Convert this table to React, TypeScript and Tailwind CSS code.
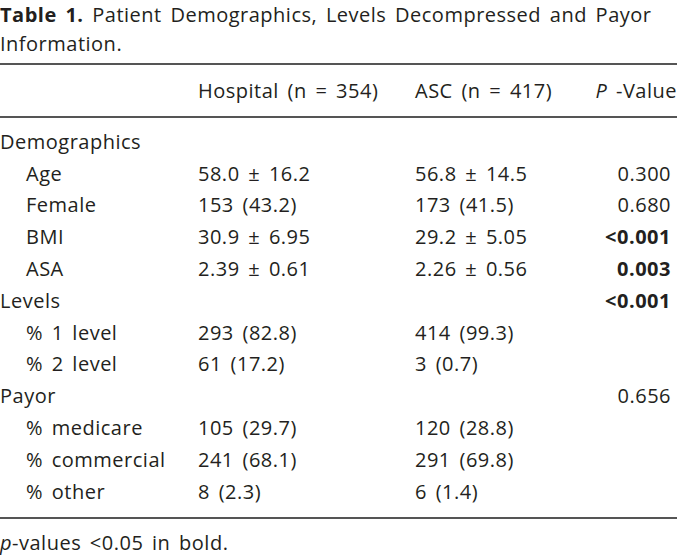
const rows: { label: string; indent?: boolean; h?: string; a?: string; p?: string; bold?: boolean }[] = [
  { label: "Demographics" },
  { label: "Age", indent: true, h: "58.0 ± 16.2", a: "56.8 ± 14.5", p: "0.300" },
  { label: "Female", indent: true, h: "153 (43.2)", a: "173 (41.5)", p: "0.680" },
  { label: "BMI", indent: true, h: "30.9 ± 6.95", a: "29.2 ± 5.05", p: "<0.001", bold: true },
  { label: "ASA", indent: true, h: "2.39 ± 0.61", a: "2.26 ± 0.56", p: "0.003", bold: true },
  { label: "Levels", p: "<0.001", bold: true },
  { label: "% 1 level", indent: true, h: "293 (82.8)", a: "414 (99.3)" },
  { label: "% 2 level", indent: true, h: "61 (17.2)", a: "3 (0.7)" },
  { label: "Payor", p: "0.656" },
  { label: "% medicare", indent: true, h: "105 (29.7)", a: "120 (28.8)" },
  { label: "% commercial", indent: true, h: "241 (68.1)", a: "291 (69.8)" },
  { label: "% other", indent: true, h: "8 (2.3)", a: "6 (1.4)" },
];

export default function App() {
  return (
    <div className="w-[677px] h-[555px] bg-white text-[#231f20] font-['Open_Sans',sans-serif] text-[20px] tracking-[0.5px] [word-spacing:3px] overflow-hidden">
      <p className="leading-[29px]">
        <span className="font-bold">Table 1.</span> Patient Demographics, Levels Decompressed and Payor
        <br />
        Information.
      </p>
      <div className="mt-[5px] border-t-2 border-[#555]" />
      <div className="grid grid-cols-[198px_217px_1fr] h-[51px] items-center">
        <div />
        <div>Hospital (n = 354)</div>
        <div className="flex justify-between">
          <span>ASC (n = 417)</span>
          <span>
            <span className="italic">P</span> -Value
          </span>
        </div>
      </div>
      <div className="border-t-2 border-[#555]" />
      <div className="pt-[8px] pb-[9px]">
        {rows.map((r) => (
          <div key={r.label} className="grid grid-cols-[198px_217px_1fr_auto] h-[31.8px] items-center">
            <div className={r.indent ? "pl-[26px]" : ""}>{r.label}</div>
            <div>{r.h ?? ""}</div>
            <div>{r.a ?? ""}</div>
            <div className={"text-right pr-[6px] " + (r.bold ? "font-bold" : "")}>{r.p ?? ""}</div>
          </div>
        ))}
      </div>
      <div className="border-t-2 border-[#555]" />
      <p className="mt-[14px] leading-[20px]">
        <span className="italic">p</span>-values &lt;0.05 in bold.
      </p>
    </div>
  );
}
